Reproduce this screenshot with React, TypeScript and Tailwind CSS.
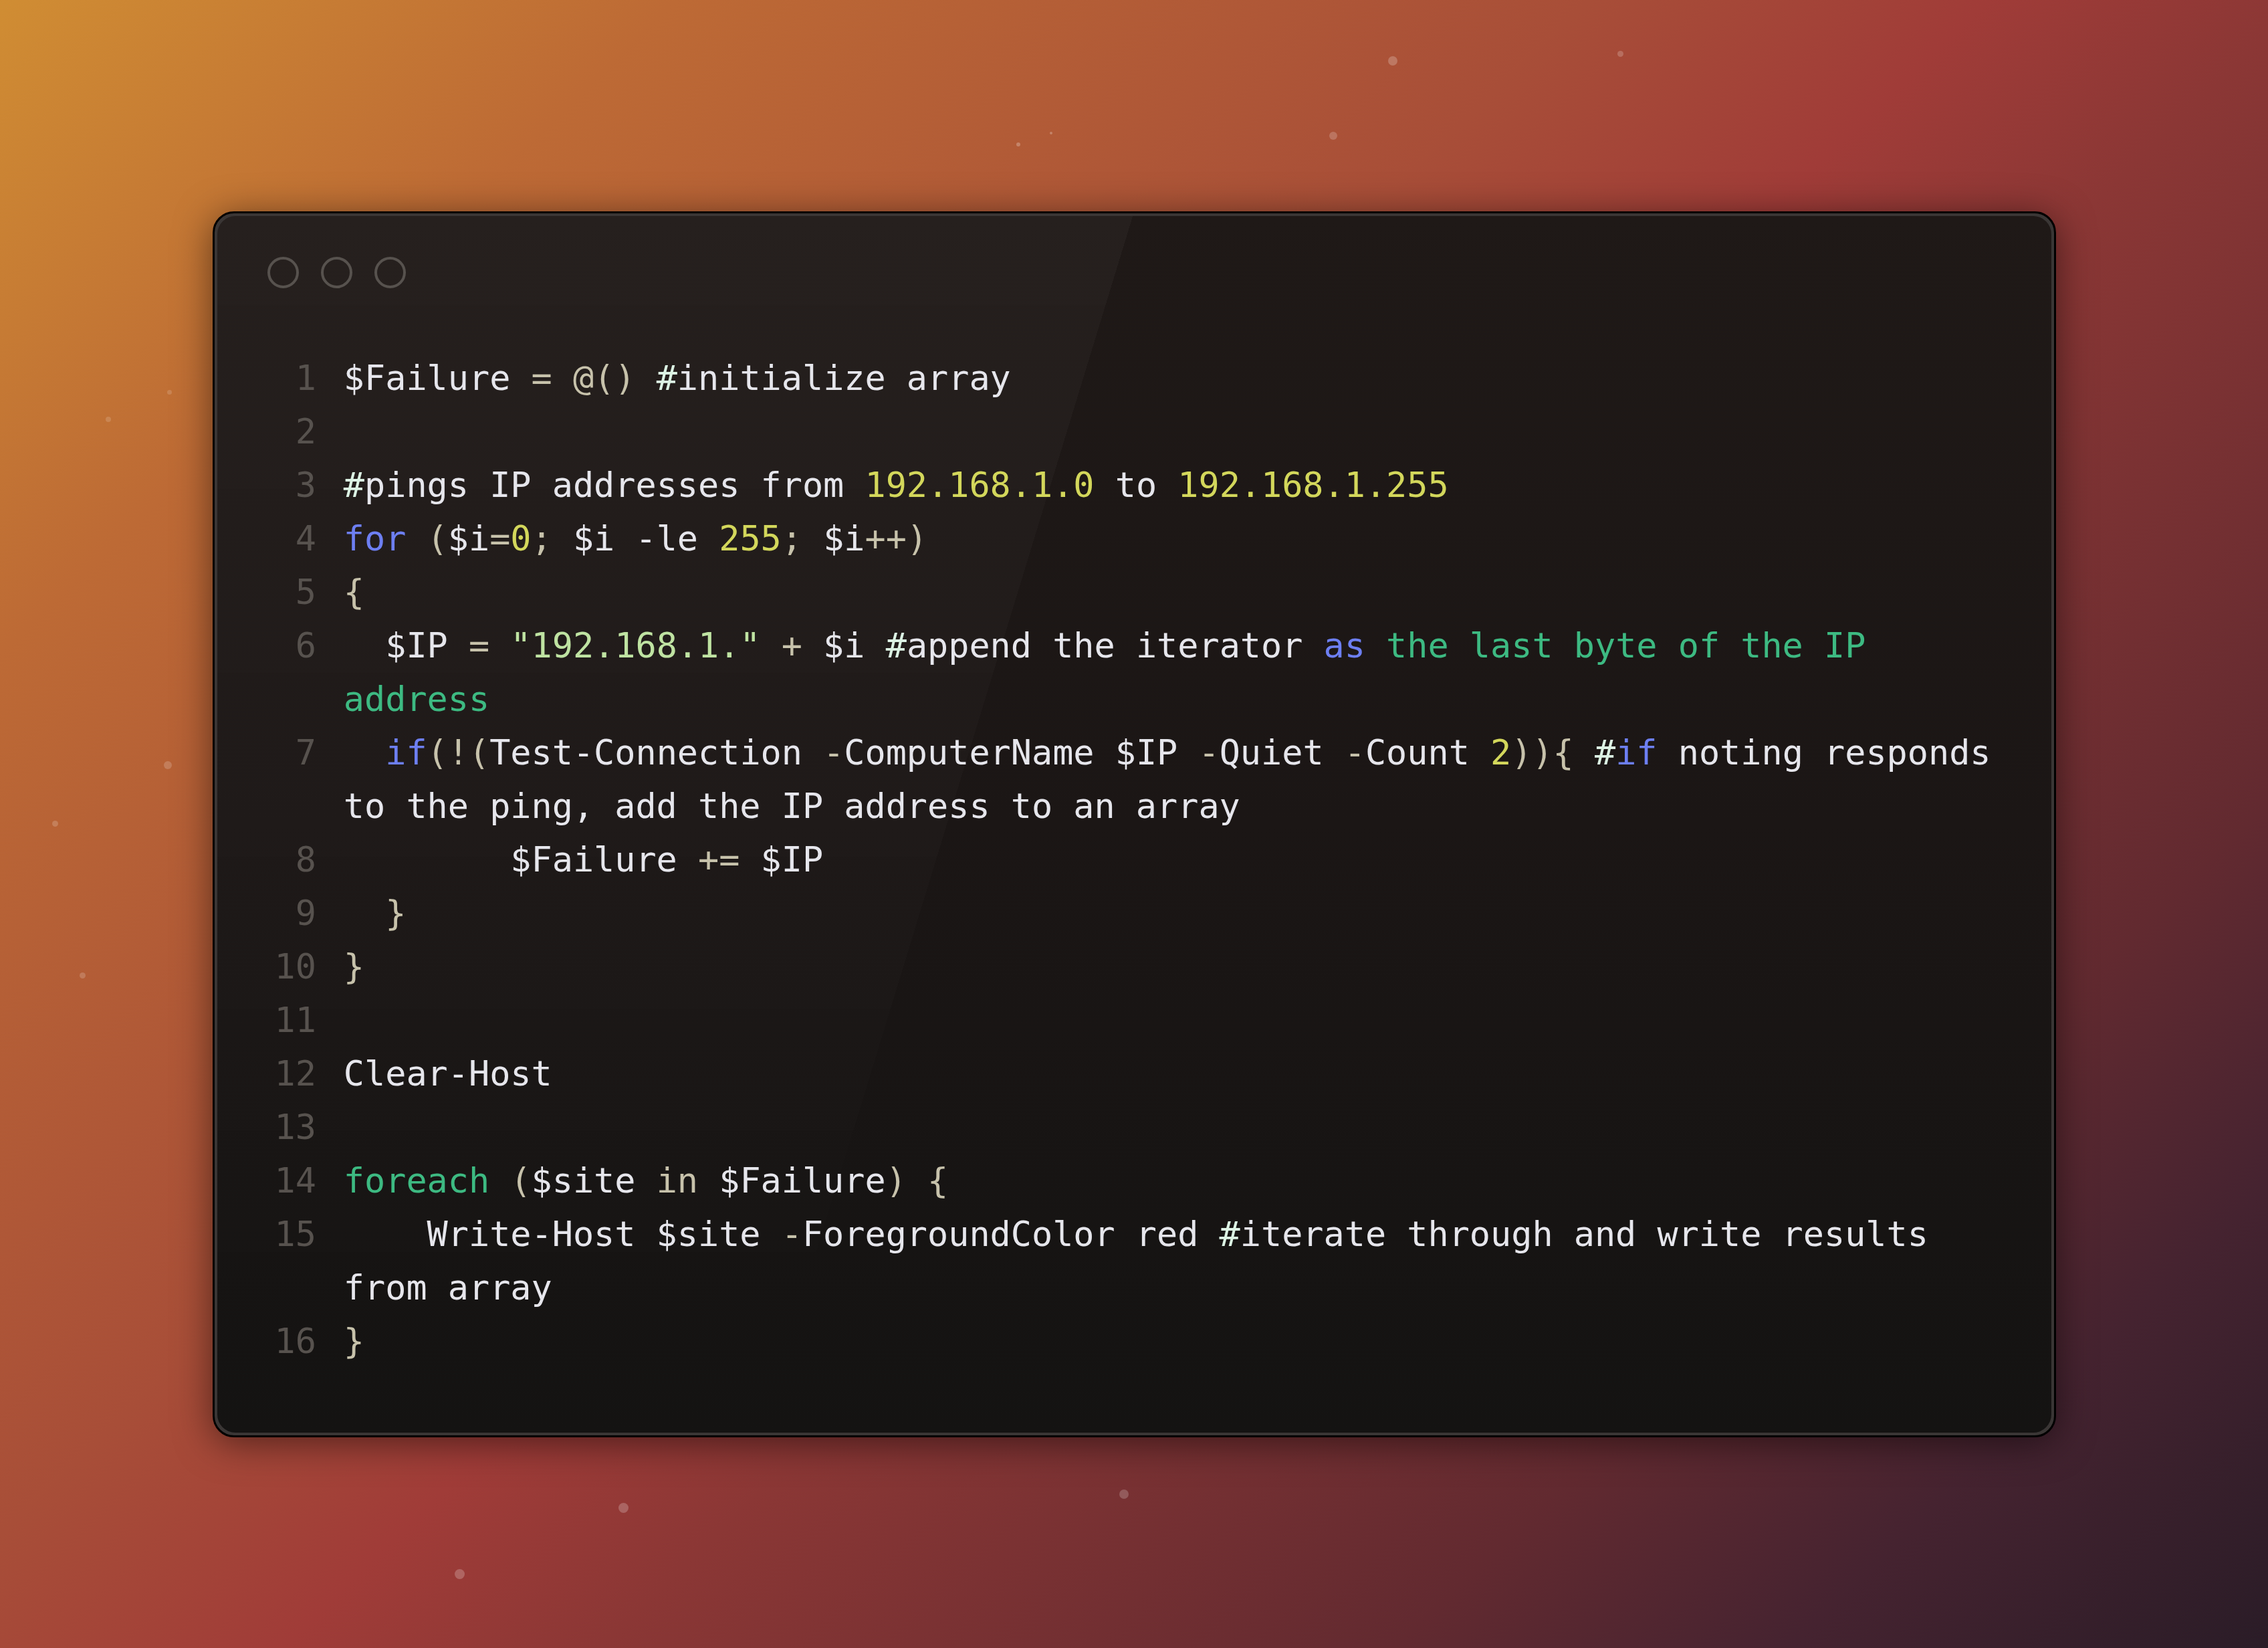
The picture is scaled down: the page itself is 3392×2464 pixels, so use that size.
import React from "react";

type Seg = [string, string];

const W = "text-[#e6e6ec]";
const P = "text-[#c7c2ab]";
const Y = "text-[#d3d75b]";
const S = "text-[#bfe3a2]";
const B = "text-[#6d7ff2]";
const G = "text-[#3dba82]";
const H = "text-[#dcf3e4]";

type Row = { n?: number; segs: Seg[] };

const rows: Row[] = [
  { n: 1, segs: [["$Failure ", W], ["=", P], [" ", W], ["@()", P], [" ", W], ["#", H], ["initialize array", W]] },
  { n: 2, segs: [] },
  { n: 3, segs: [["#", H], ["pings IP addresses from ", W], ["192.168.1.0", Y], [" to ", W], ["192.168.1.255", Y]] },
  { n: 4, segs: [["for", B], [" ", W], ["(", P], ["$i", W], ["=", P], ["0", Y], [";", P], [" $i -le ", W], ["255", Y], [";", P], [" $i", W], ["++", P], [")", P]] },
  { n: 5, segs: [["{", P]] },
  { n: 6, segs: [["  $IP ", W], ["=", P], [" ", W], ['"192.168.1."', S], [" ", W], ["+", P], [" $i ", W], ["#", H], ["append the iterator ", W], ["as", B], [" the last byte of the IP", G]] },
  { segs: [["address", G]] },
  { n: 7, segs: [["  ", W], ["if", B], ["(!(", P], ["Test-Connection ", W], ["-", P], ["ComputerName $IP ", W], ["-", P], ["Quiet ", W], ["-", P], ["Count ", W], ["2", Y], [")){", P], [" ", W], ["#", H], ["if", B], [" noting responds", W]] },
  { segs: [["to the ping, add the IP address to an array", W]] },
  { n: 8, segs: [["        $Failure ", W], ["+=", P], [" $IP", W]] },
  { n: 9, segs: [["  ", W], ["}", P]] },
  { n: 10, segs: [["}", P]] },
  { n: 11, segs: [] },
  { n: 12, segs: [["Clear-Host", W]] },
  { n: 13, segs: [] },
  { n: 14, segs: [["foreach", G], [" ", W], ["(", P], ["$site ", W], ["in", P], [" $Failure", W], [")", P], [" ", W], ["{", P]] },
  { n: 15, segs: [["    Write-Host $site ", W], ["-", P], ["ForegroundColor red ", W], ["#", H], ["iterate through and write results", W]] },
  { segs: [["from array", W]] },
  { n: 16, segs: [["}", P]] },
];

const dots: { x: number; y: number; s: number; o: number }[] = [
  { x: 2083, y: 91, s: 14, o: 0.22 },
  { x: 2423, y: 80, s: 9, o: 0.2 },
  { x: 1994, y: 203, s: 12, o: 0.2 },
  { x: 1523, y: 216, s: 6, o: 0.25 },
  { x: 1572, y: 199, s: 4, o: 0.25 },
  { x: 251, y: 1144, s: 12, o: 0.18 },
  { x: 82, y: 1231, s: 9, o: 0.18 },
  { x: 123, y: 1458, s: 9, o: 0.18 },
  { x: 253, y: 586, s: 7, o: 0.15 },
  { x: 162, y: 627, s: 8, o: 0.15 },
  { x: 932, y: 2254, s: 15, o: 0.22 },
  { x: 687, y: 2353, s: 15, o: 0.22 },
  { x: 1681, y: 2234, s: 14, o: 0.2 },
];

export default function App() {
  return (
    <div className="relative w-full h-[2464px] overflow-hidden flex items-center justify-center bg-[linear-gradient(136deg,#d08d33_0%,#bd6a35_17%,#a84e38_40%,#a03c38_50%,#8b3735_58%,#622a30_78%,#452330_88%,#2a1c27_100%)]">
      {dots.map((d, i) => (
        <div
          key={i}
          className="absolute rounded-full bg-white"
          style={{ left: d.x - d.s / 2, top: d.y - d.s / 2, width: d.s, height: d.s, opacity: d.o }}
        />
      ))}
      <div className="relative w-[2757px] rounded-[32px] border-[3px] border-black bg-[#3a3635] p-[4px] shadow-[0_8px_55px_rgba(0,0,0,0.5)]">
        <div className="relative overflow-hidden rounded-[27px] bg-[linear-gradient(180deg,#1f1917_0%,#1b1615_50%,#141312_100%)] pl-[75px] pr-[60px] pt-[61px] pb-[97px]">
          <div className="pointer-events-none absolute inset-0 bg-[linear-gradient(107deg,rgba(255,255,255,0.03)_41.5%,transparent_41.5%)] [mask-image:linear-gradient(to_bottom,black_0%,rgba(0,0,0,0.5)_60%,transparent_100%)]" />
          <div className="relative flex gap-[33px]">
            <div className="h-[47px] w-[47px] rounded-full border-[4px] border-[#57524e]" />
            <div className="h-[47px] w-[47px] rounded-full border-[4px] border-[#57524e]" />
            <div className="h-[47px] w-[47px] rounded-full border-[4px] border-[#57524e]" />
          </div>
          <div
            className="relative mt-[94px] pl-[11px] text-[51.8px] leading-[80px]"
            style={{ fontFamily: '"DejaVu Sans Mono", "Liberation Mono", monospace' }}
          >
            {rows.map((r, i) => (
              <div key={i} className="flex h-[80px] gap-[41px]">
                <div className="w-[2ch] shrink-0 text-right text-[#57524e]">{r.n ?? ""}</div>
                <div className="whitespace-pre">
                  {r.segs.map((s, j) => (
                    <span key={j} className={s[1]}>
                      {s[0]}
                    </span>
                  ))}
                </div>
              </div>
            ))}
          </div>
        </div>
      </div>
    </div>
  );
}
